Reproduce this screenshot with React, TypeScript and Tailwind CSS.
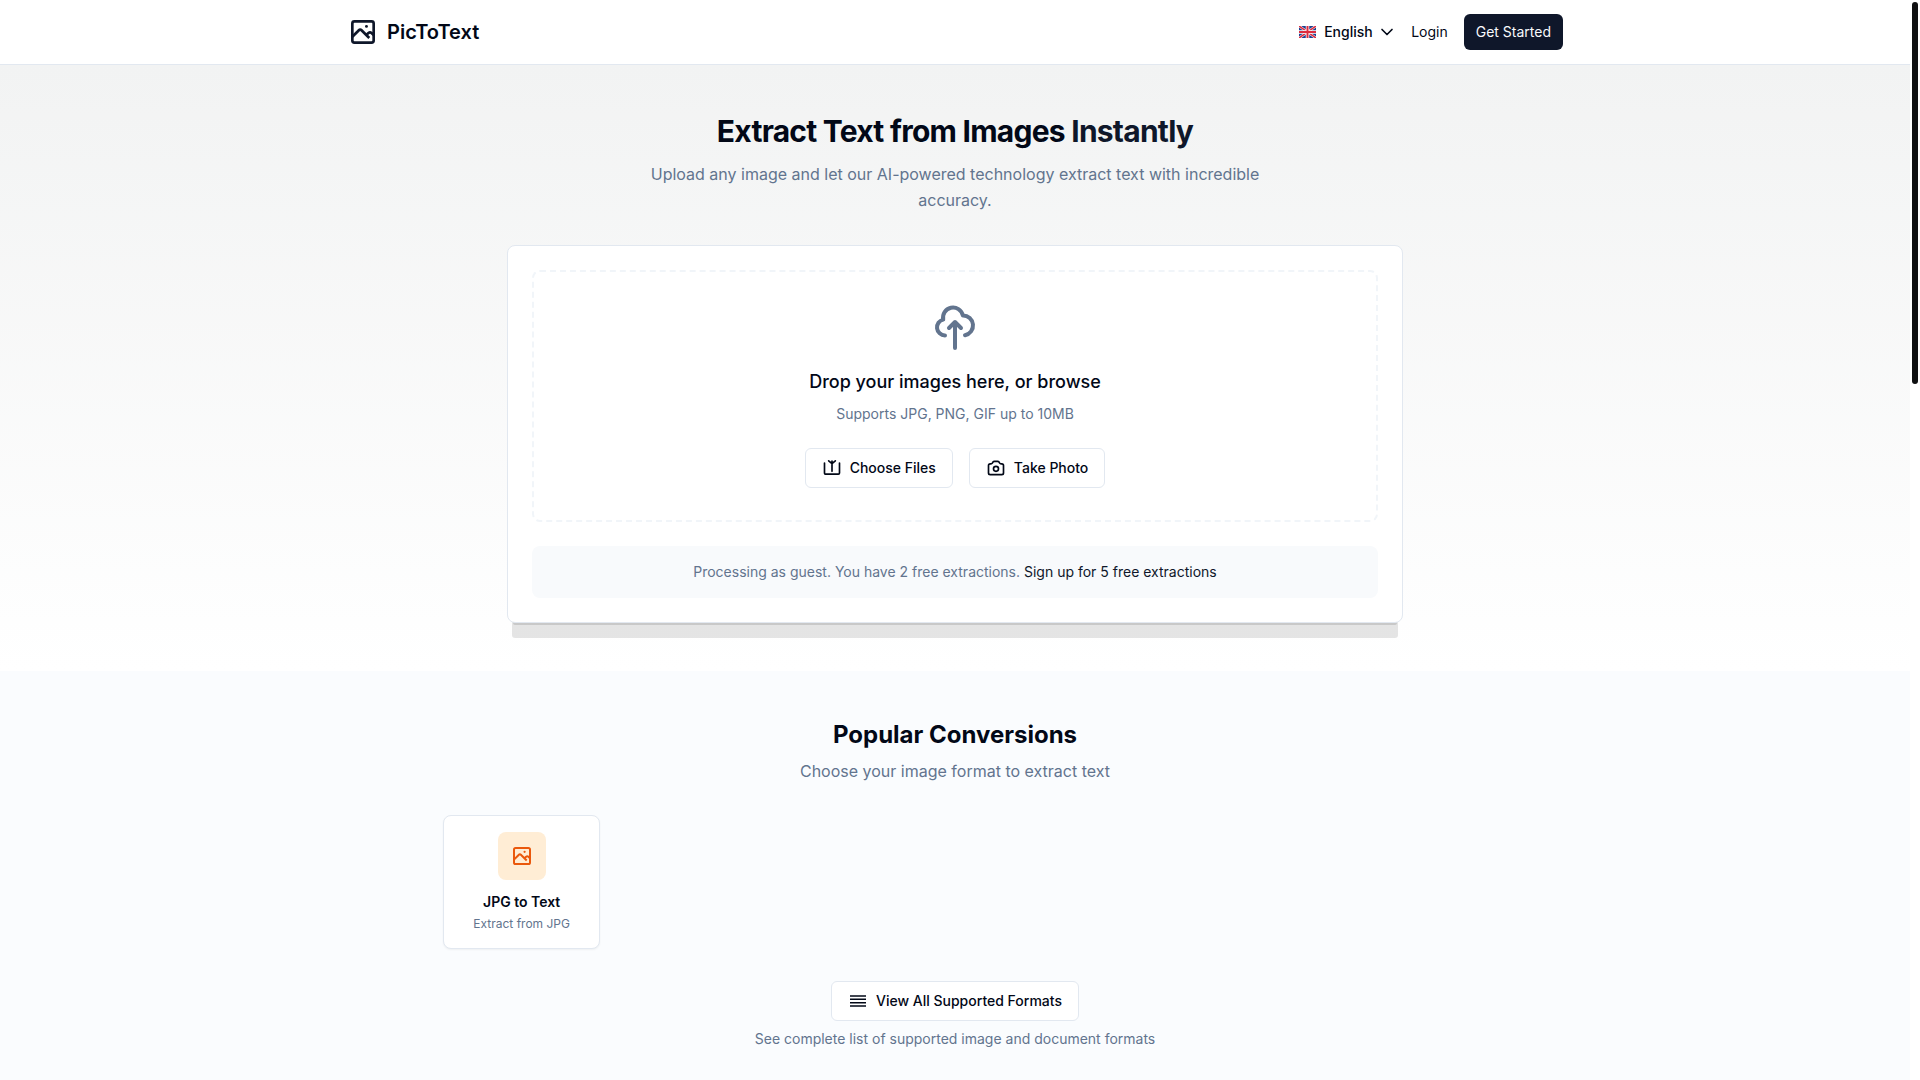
import React from "react";

function ImageIcon({ className }: { className?: string }) {
  return (
    <svg
      viewBox="0 0 24 24"
      fill="none"
      stroke="currentColor"
      strokeWidth="2"
      strokeLinejoin="round"
      className={className}
      aria-hidden="true"
    >
      <rect x="4" y="4" width="16" height="16" rx="1.6" />
      <path d="M4 15.6l4.9-4.9a1.4 1.4 0 0 1 2 0l5.8 5.8" />
      <path d="M14.4 14.2l1.7-1.5a1.8 1.8 0 0 1 2.3 0L20 14.2" />
      <circle cx="14.6" cy="7.8" r="1.1" fill="currentColor" stroke="none" />
    </svg>
  );
}

function CloudUploadIcon({ className }: { className?: string }) {
  return (
    <svg
      viewBox="0 0 24 24"
      fill="none"
      stroke="currentColor"
      strokeWidth="2"
      strokeLinecap="round"
      strokeLinejoin="round"
      className={className}
      aria-hidden="true"
    >
      <path d="M7 16a4 4 0 0 1-.88-7.903A5 5 0 1 1 15.9 6H16a5 5 0 0 1 1 9.9" transform="translate(0 -0.3)" />
      <path d="M9 12l3-3 3 3M12 9v13" />
    </svg>
  );
}

function UploadIcon({ className }: { className?: string }) {
  return (
    <svg
      viewBox="0 0 24 24"
      fill="none"
      stroke="currentColor"
      strokeWidth="2"
      strokeLinecap="round"
      strokeLinejoin="round"
      className={className}
      aria-hidden="true"
    >
      <path d="M3 6v12a1.4 1.4 0 0 0 1.4 1.4h15.2A1.4 1.4 0 0 0 21 18V6" />
      <path d="M12 16V3.6M8 3.4l4 3.4 4-3.4" />
    </svg>
  );
}

function CameraIcon({ className }: { className?: string }) {
  return (
    <svg
      viewBox="0 0 24 24"
      fill="none"
      stroke="currentColor"
      strokeWidth="2"
      strokeLinecap="round"
      strokeLinejoin="round"
      className={className}
      aria-hidden="true"
    >
      <path d="M3 9a2 2 0 0 1 2-2h.93a2 2 0 0 0 1.664-.89l.812-1.22A2 2 0 0 1 10.07 4h3.86a2 2 0 0 1 1.664.89l.812 1.22A2 2 0 0 0 18.07 7H19a2 2 0 0 1 2 2v9a2 2 0 0 1-2 2H5a2 2 0 0 1-2-2V9z" />
      <circle cx="12" cy="13" r="3" />
    </svg>
  );
}

function ListIcon({ className }: { className?: string }) {
  return (
    <svg
      viewBox="0 0 20 20"
      fill="none"
      stroke="currentColor"
      strokeWidth="1.6"
      className={className}
      aria-hidden="true"
    >
      <path d="M2 5h16M2 8.3h16M2 11.7h16M2 15h16" />
    </svg>
  );
}

function ChevronIcon({ className }: { className?: string }) {
  return (
    <svg
      viewBox="0 0 24 24"
      fill="none"
      stroke="currentColor"
      strokeWidth="2"
      strokeLinecap="round"
      strokeLinejoin="round"
      className={className}
      aria-hidden="true"
    >
      <path d="M6 9l6 6 6-6" />
    </svg>
  );
}

function UkFlag({ className }: { className?: string }) {
  return (
    <svg viewBox="0 0 34 24" className={className} aria-hidden="true">
      <rect width="34" height="24" rx="1" fill="#1a3f8f" />
      <path d="M0 0l34 24M34 0L0 24" stroke="#fff" strokeWidth="5" />
      <path d="M0 0l34 24M34 0L0 24" stroke="#dc2c3e" strokeWidth="3" />
      <path d="M17 0v24M0 12h34" stroke="#fff" strokeWidth="7" />
      <path d="M17 0v24M0 12h34" stroke="#dc2c3e" strokeWidth="4" />
    </svg>
  );
}

const outlineButton =
  "inline-flex h-10 items-center justify-center gap-2 rounded-md border border-slate-200 bg-white px-4 text-sm font-medium text-[#020817]";

const conversions = [{ title: "JPG to Text", description: "Extract from JPG" }];

function Header() {
  return (
    <header className="border-b border-slate-200 bg-white">
      <div className="mx-auto flex h-16 max-w-7xl items-center justify-between px-8">
        <a href="#" className="flex items-center gap-2">
          <ImageIcon className="size-8 text-[#0f172a]" />
          <span className="text-xl font-semibold">PicToText</span>
        </a>

        <nav className="flex items-center gap-4">
          <div className="-mr-0.5 flex items-center gap-2">
            <UkFlag className="h-3 w-[17px]" />
            <div className="grid items-center">
              <select
                id="language"
                aria-label="Language"
                defaultValue="en"
                className="col-start-1 row-start-1 h-5 appearance-none bg-transparent pr-6 text-sm/5 font-medium"
              >
                <option value="en">English</option>
              </select>
              <ChevronIcon className="pointer-events-none col-start-1 row-start-1 size-5 justify-self-end" />
            </div>
          </div>
          <a href="#login" className="text-sm">
            Login
          </a>
          <a
            href="#register"
            className="flex h-9 items-center rounded-md bg-[#0f172a] px-3 text-sm text-slate-50"
          >
            Get Started
          </a>
        </nav>
      </div>
    </header>
  );
}

function Uploader() {
  return (
    <div className="mx-auto mt-8 max-w-4xl rounded-lg border border-slate-200 bg-white p-6 shadow-[0_20px_0_-5px_rgba(0,0,0,0.1),0_8px_0_-6px_rgba(0,0,0,0.12)]">
      <div className="flex flex-col items-center rounded-lg border-2 border-dashed border-slate-100 p-8 text-center">
        <CloudUploadIcon className="size-12 text-slate-500" />
        <h3 className="mt-4 text-lg/7 font-medium">Drop your images here, or browse</h3>
        <p className="mt-2 text-sm text-slate-500">Supports JPG, PNG, GIF up to 10MB</p>
        <div className="mt-6 flex gap-4">
          <button type="button" className={outlineButton}>
            <UploadIcon className="size-5" />
            Choose Files
          </button>
          <button type="button" className={outlineButton}>
            <CameraIcon className="size-5" />
            Take Photo
          </button>
        </div>
      </div>

      <p className="mt-6 rounded-lg bg-[#f8fafc] p-4 text-center text-sm text-slate-500">
        Processing as guest. You have 2 free extractions.{" "}
        <a href="#register" className="text-[#0f172a]">
          Sign up for 5 free extractions
        </a>
      </p>
    </div>
  );
}

function Conversions() {
  return (
    <section className="bg-[#fafcfe] px-8 py-12 text-center">
      <h2 className="text-2xl font-bold">Popular Conversions</h2>
      <p className="mt-2 text-slate-500">Choose your image format to extract text</p>

      <div className="mx-auto mt-8 grid max-w-5xl grid-cols-2 gap-4 md:grid-cols-4 lg:grid-cols-6">
        {conversions.map((item) => (
          <a
            key={item.title}
            href="#convert"
            className="flex flex-col items-center rounded-lg border border-slate-200 bg-white p-4 shadow-xs"
          >
            <span className="flex size-12 items-center justify-center rounded-lg bg-[#ffedd5]">
              <ImageIcon className="size-6 text-[#ea580c]" />
            </span>
            <h3 className="mt-3 text-sm font-semibold">{item.title}</h3>
            <p className="mt-1 text-xs text-slate-500">{item.description}</p>
          </a>
        ))}
      </div>

      <div className="mt-8">
        <a href="#formats" className={outlineButton}>
          <ListIcon className="size-5" />
          View All Supported Formats
        </a>
        <p className="mt-2 text-sm text-slate-500">
          See complete list of supported image and document formats
        </p>
      </div>
    </section>
  );
}

export default function App() {
  return (
    <div className="flex h-screen overflow-hidden bg-white font-[Inter,sans-serif] text-[#020817] antialiased">
      <div className="min-w-0 flex-1">
        <Header />
        <main>
          <section className="bg-linear-to-b from-[#f2f3f3] to-white px-8 py-12">
            <div className="text-center">
              <h1 className="text-3xl font-bold tracking-tight">
                Extract Text from Images <span className="text-[#0f172a]">Instantly</span>
              </h1>
              <p className="mx-auto mt-3 max-w-2xl text-base/[26px] text-slate-500">
                Upload any image and let our AI-powered technology extract text with incredible
                accuracy.
              </p>
            </div>
            <Uploader />
          </section>
          <Conversions />
        </main>
      </div>

      {/* Scroll rail */}
      <div className="w-[10px] shrink-0 p-0.5">
        <div className="h-[382px] w-1.5 rounded-full bg-[#0f1011]" />
      </div>
    </div>
  );
}
